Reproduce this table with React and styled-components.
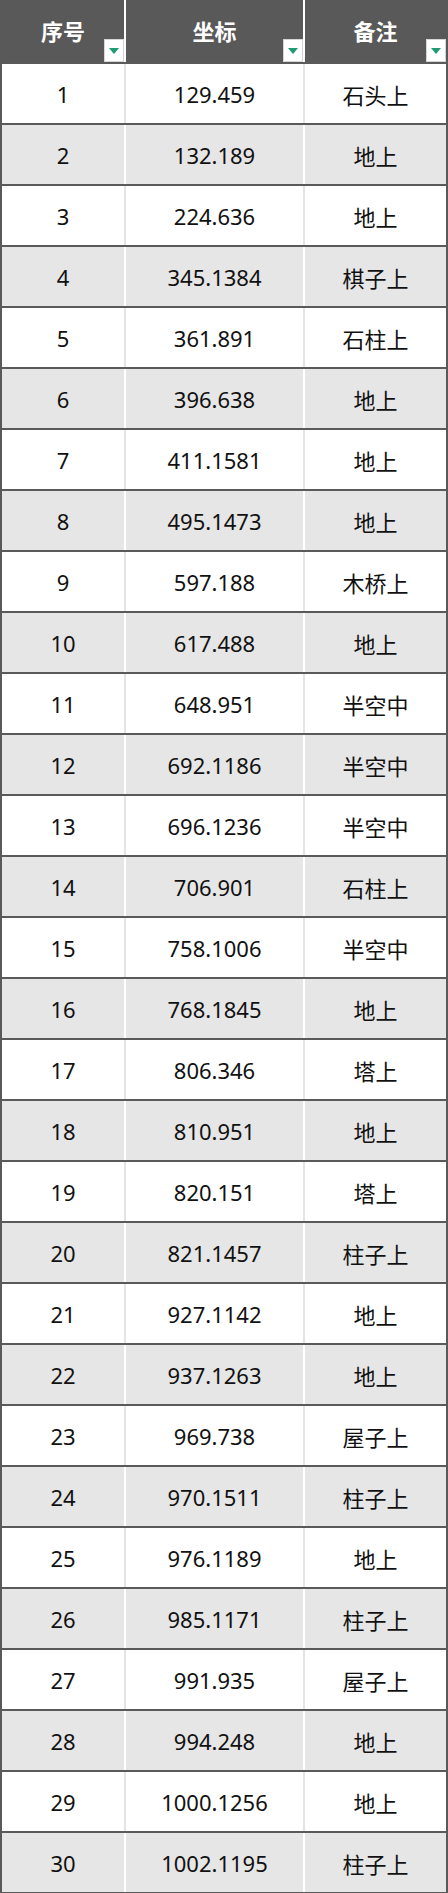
import React from "react";
import styled, { createGlobalStyle } from "styled-components";

const rows = [
  ["1", "129.459", "石头上"],
  ["2", "132.189", "地上"],
  ["3", "224.636", "地上"],
  ["4", "345.1384", "棋子上"],
  ["5", "361.891", "石柱上"],
  ["6", "396.638", "地上"],
  ["7", "411.1581", "地上"],
  ["8", "495.1473", "地上"],
  ["9", "597.188", "木桥上"],
  ["10", "617.488", "地上"],
  ["11", "648.951", "半空中"],
  ["12", "692.1186", "半空中"],
  ["13", "696.1236", "半空中"],
  ["14", "706.901", "石柱上"],
  ["15", "758.1006", "半空中"],
  ["16", "768.1845", "地上"],
  ["17", "806.346", "塔上"],
  ["18", "810.951", "地上"],
  ["19", "820.151", "塔上"],
  ["20", "821.1457", "柱子上"],
  ["21", "927.1142", "地上"],
  ["22", "937.1263", "地上"],
  ["23", "969.738", "屋子上"],
  ["24", "970.1511", "柱子上"],
  ["25", "976.1189", "地上"],
  ["26", "985.1171", "柱子上"],
  ["27", "991.935", "屋子上"],
  ["28", "994.248", "地上"],
  ["29", "1000.1256", "地上"],
  ["30", "1002.1195", "柱子上"],
];

const headers = ["序号", "坐标", "备注"];

const GlobalStyle = createGlobalStyle`
  body {
    margin: 0;
    background: #fff;
    font-family: "Noto Sans", "Noto Sans CJK SC", sans-serif;
  }
`;

const Sheet = styled.div`
  width: 448px;
  box-sizing: border-box;
  border-left: 2px solid #595959;
  border-right: 2px solid #595959;
  border-bottom: 1px solid #595959;
`;

const Row = styled.div`
  display: grid;
  grid-template-columns: 124px 179px 1fr;
  box-sizing: border-box;
  height: ${(p) => (p.$head ? 62 : 61)}px;
  background: ${(p) => (p.$head ? "#595959" : p.$shade ? "#e6e6e6" : "#fff")};
  border-top: ${(p) => (p.$head ? "none" : "2px solid #5a5a5a")};
`;

const HeadCell = styled.div`
  position: relative;
  display: flex;
  align-items: center;
  justify-content: center;
  padding-bottom: 2px;
  color: #fff;
  font-family: "Noto Sans CJK SC", sans-serif;
  font-weight: 700;
  font-size: 22px;
  border-right: ${(p) => (p.$last ? "none" : "2px solid #fff")};
`;

const FilterButton = styled.span`
  position: absolute;
  right: 0;
  bottom: 0;
  width: 20px;
  height: 23px;
  box-sizing: border-box;
  background: #fff;
  border: 1px solid #d6d6d6;
  display: flex;
  align-items: center;
  justify-content: center;
  padding-top: 1px;
`;

const Cell = styled.div`
  display: flex;
  align-items: center;
  justify-content: center;
  color: #111;
  font-size: 22px;
  font-family: ${(p) =>
    p.$cjk
      ? '"Noto Sans CJK SC", sans-serif'
      : '"Noto Sans", "Noto Sans CJK SC", sans-serif'};
  border-right: ${(p) =>
    p.$last ? "none" : p.$shade ? "2px solid #fff" : "2px solid #e4e4e4"};
`;

const Arrow = () => (
  <svg width="10" height="6" viewBox="0 0 10 6">
    <path d="M0 0 H10 L5 6 Z" fill="#1e9b72" />
  </svg>
);

export default function App() {
  return (
    <>
      <GlobalStyle />
      <Sheet>
        <Row $head>
          {headers.map((h, i) => (
            <HeadCell key={h} $last={i === 2}>
              {h}
              <FilterButton>
                <Arrow />
              </FilterButton>
            </HeadCell>
          ))}
        </Row>
        {rows.map((r, idx) => {
          const shade = idx % 2 === 1;
          return (
            <Row key={r[0]} $shade={shade}>
              <Cell $shade={shade}>{r[0]}</Cell>
              <Cell $shade={shade}>{r[1]}</Cell>
              <Cell $shade={shade} $cjk $last>
                {r[2]}
              </Cell>
            </Row>
          );
        })}
      </Sheet>
    </>
  );
}
